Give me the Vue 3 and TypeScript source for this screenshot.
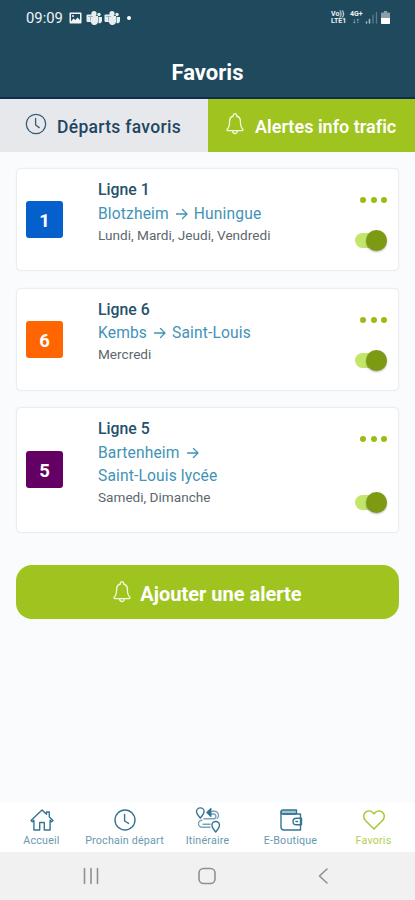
<script setup lang="ts">
import { ref } from 'vue'

interface Alert {
  line: number
  tone: string
  from: string
  to: string
  days: string
  wrap: boolean
  on: boolean
}

const alerts = ref<Alert[]>([
  { line: 1, tone: 'blue', from: 'Blotzheim', to: 'Huningue', days: 'Lundi, Mardi, Jeudi, Vendredi', wrap: false, on: true },
  { line: 6, tone: 'orange', from: 'Kembs', to: 'Saint-Louis', days: 'Mercredi', wrap: false, on: true },
  { line: 5, tone: 'purple', from: 'Bartenheim', to: 'Saint-Louis lycée', days: 'Samedi, Dimanche', wrap: true, on: true },
])
</script>

<template>
  <div class="screen">
    <header class="top">
      <div class="status">
        <span class="time">09:09</span>
        <svg class="s-img" viewBox="0 0 13 12"><rect x="0.5" y="0.5" width="12" height="11" rx="1" fill="#f2f6f8" /><path d="M2 9.500V2h9v6L8.500 5.500 6.500 8 4.500 6.500z" fill="#1f4a5e" /><circle cx="4" cy="4" r="1" fill="#f2f6f8" /></svg>
        <svg v-for="n in 2" :key="n" class="s-teams" viewBox="0 0 16 14"><g fill="#e6edf0"><circle cx="8" cy="2.700" r="2.600" /><circle cx="13" cy="3.500" r="1.700" /><path d="M5 5h7v6a3.600 3.600 0 0 1-7 .5z" /><path d="M12.500 6H16v4a2.500 2.500 0 0 1-3.500 2z" /><rect x="0.500" y="3.500" width="8" height="7.500" rx="1" /></g><path d="M2.500 5.500h4M4.500 5.500v4" stroke="#9fb1ba" stroke-width="1" /></svg>
        <i class="dot"></i>
        <span class="net"><b>Vo))</b><b>LTE1</b></span>
        <span class="net data"><b>4G+</b><b>↓↑</b></span>
        <svg class="signal" viewBox="0 0 13 13"><path d="M1.500 11v1M4.500 8.500v3.500" stroke="#a7bac3" stroke-width="1.600" /><path d="M8 4.500V12M11.500 1.500V12" stroke="#5d7b89" stroke-width="1.300" /></svg>
        <svg class="battery" viewBox="0 0 9 13"><path d="M3 0h3v1.500h2a1 1 0 0 1 1 1V12a1 1 0 0 1-1 1H1a1 1 0 0 1-1-1V2.500a1 1 0 0 1 1-1h2z" fill="#8a9fa9" /><path d="M0 7h9v5a1 1 0 0 1-1 1H1a1 1 0 0 1-1-1z" fill="#fff" /></svg>
      </div>
      <h1>Favoris</h1>
    </header>

    <nav class="tabs">
      <div class="tab">
        <svg class="clock" viewBox="0 0 22 22"><circle cx="11" cy="11" r="9.700" /><path d="M10.600 5.500V12l3.600 2.600" /></svg>
        <span>Départs favoris</span>
      </div>
      <div class="tab active">
        <svg class="bell" viewBox="0 0 18 22"><path d="M7.400 3V2.300a1.600 1.600 0 0 1 3.200 0V3c2.500.7 3.800 2.600 3.800 5.200 0 4.600.5 6.300 2.300 7.700.6.600.3 1.700-.6 1.700H1.900c-.9 0-1.200-1.100-.6-1.700 1.800-1.400 2.300-3.100 2.300-7.700C3.600 5.600 4.900 3.700 7.400 3zM6.700 18a2.300 2.500 0 0 0 4.600 0" /></svg>
        <span>Alertes info trafic</span>
      </div>
    </nav>

    <main class="content">
      <article v-for="a in alerts" :key="a.line" class="card">
        <div class="badge" :class="a.tone">{{ a.line }}</div>
        <div class="info">
          <h2>Ligne {{ a.line }}</h2>
          <p class="route">
            <span>{{ a.from }}</span>
            <svg class="arrow" viewBox="0 0 12 12"><path d="M0.500 6h10.500M6.500 1.500 11 6l-4.500 4.500" /></svg>
            <br v-if="a.wrap" />
            <span>{{ a.to }}</span>
          </p>
          <p class="days">{{ a.days }}</p>
        </div>
        <div class="actions">
          <div class="more"><i></i><i></i><i></i></div>
          <button class="toggle" :class="{ on: a.on }" @click="a.on = !a.on"><i></i></button>
        </div>
      </article>

      <button class="add">
        <svg class="bell" viewBox="0 0 18 22"><path d="M7.400 3V2.300a1.600 1.600 0 0 1 3.200 0V3c2.500.7 3.800 2.600 3.800 5.200 0 4.600.5 6.300 2.300 7.700.6.600.3 1.700-.6 1.700H1.900c-.9 0-1.200-1.100-.6-1.700 1.800-1.400 2.300-3.100 2.300-7.700C3.600 5.600 4.900 3.700 7.400 3zM6.700 18a2.300 2.500 0 0 0 4.600 0" /></svg>
        <span>Ajouter une alerte</span>
      </button>
    </main>

    <nav class="bottom">
      <div class="item">
        <svg viewBox="0 0 24 24"><path d="M1 12.500 12 2l4.500 4.300V4h2.800v5L23 12.500l-1.300 1.300-1.600-1.500V22h-5.800v-7.500H9.700V22H3.900v-9.700l-1.600 1.500z" /></svg>
        <span>Accueil</span>
      </div>
      <div class="item">
        <svg viewBox="0 0 24 24"><circle cx="12" cy="12" r="10" /><path d="M11.600 6.500V13l4 2.400" /></svg>
        <span>Prochain départ</span>
      </div>
      <div class="item">
        <svg class="trip" viewBox="0 0 26 26"><path class="road" d="M17 4.200h2.500a4.200 4.200 0 0 1 3 7M9 11.800h8.500M7 13.200a3.400 3.400 0 0 0 0 7h8M15 7h3.500a2.400 2.400 0 0 1 0 4.800M8 17.200h7" /><path d="M5.300 11C3 8.200 1.500 6.500 1.500 4.700a3.800 3.800 0 0 1 7.600 0c0 1.800-1.500 3.500-3.800 6.300zM20.700 25c-2.300-2.800-3.800-4.700-3.800-6.700a3.800 3.800 0 0 1 7.600 0c0 2-1.500 3.900-3.800 6.700z" /><path d="M15.800 1.800 12 5.600l3.800 3.600z" fill="#347594" /></svg>
        <span>Itinéraire</span>
      </div>
      <div class="item">
        <svg viewBox="0 0 24 24"><path d="M2 4a2 2 0 0 1 2-2h13.500v4H4a2 2 0 0 1-2-2z" fill="#a8c3d1" /><path d="M2 4v15a3 3 0 0 0 3 3h16.500V6H4M22.500 10.200h-5.200a3.300 3.300 0 0 0 0 6.600h5.200zM17 13.500h1.500" /></svg>
        <span>E-Boutique</span>
      </div>
      <div class="item active">
        <svg viewBox="0 0 24 24"><path d="M12 21 3.500 12.400C.8 9.600 1.300 5.600 4 3.900c2.700-1.700 6-.8 8 2 2-2.800 5.300-3.700 8-2 2.700 1.700 3.200 5.700.5 8.500z" /></svg>
        <span>Favoris</span>
      </div>
    </nav>

    <footer class="system">
      <svg viewBox="0 0 20 20"><path d="M3.500 2.500v15M10 2.500v15M16.500 2.500v15" /></svg>
      <svg viewBox="0 0 20 20"><rect x="2" y="2.500" width="16" height="15" rx="4.500" /></svg>
      <svg viewBox="0 0 20 20"><path d="M14 3 6.500 10l7.500 7" /></svg>
    </footer>
  </div>
</template>

<style>
body {
  margin: 0;
}
</style>

<style scoped>
.screen {
  width: 415px;
  height: 900px;
  display: flex;
  flex-direction: column;
  background: #f9fbfd;
  font-family: Roboto, "Liberation Sans", sans-serif;
  overflow: hidden;
}
h1, h2, p {
  margin: 0;
}
svg {
  fill: none;
  stroke-linecap: round;
  stroke-linejoin: round;
  flex: none;
}
.top {
  height: 99px;
  box-sizing: border-box;
  background: #1f4a5e;
  border-bottom: 2px solid #122c50;
  color: #fff;
}
.status {
  height: 34px;
  box-sizing: border-box;
  padding: 1px 25px 0 26px;
  display: flex;
  align-items: center;
}
.time {
  width: 43px;
  font-size: 14.8px;
  color: #eef3f5;
}
.s-img {
  width: 13px;
  height: 12px;
  margin-right: 4px;
}
.s-teams {
  width: 16px;
  height: 14px;
  margin-right: 2px;
}
.dot {
  width: 4px;
  height: 4px;
  margin-left: 5px;
  border-radius: 50%;
  background: #fff;
}
.net {
  width: 17px;
  margin-left: auto;
  display: flex;
  flex-direction: column;
  font-size: 7px;
  line-height: 6.5px;
  color: #eef3f5;
  white-space: nowrap;
}
.net b {
  font-weight: 700;
}
.net.data {
  width: 12px;
  margin: 0 3px 0 2px;
  text-align: center;
}
.signal {
  width: 13px;
  height: 13px;
  margin-right: 3px;
}
.battery {
  width: 9px;
  height: 13px;
}
h1 {
  padding-top: 26px;
  text-align: center;
  font-size: 22px;
  line-height: 26px;
  font-weight: 700;
}
.tabs {
  height: 53px;
  display: flex;
}
.tab {
  width: 208px;
  box-sizing: border-box;
  padding-left: 25px;
  display: flex;
  align-items: center;
  background: #e7e8ec;
  color: #1e4663;
  font-size: 17.5px;
  letter-spacing: 0.3px;
  font-weight: 500;
  white-space: nowrap;
}
.tab.active {
  width: 207px;
  padding-left: 18px;
  background: #9fc41f;
  color: #fff;
  font-size: 18px;
  letter-spacing: 0.02px;
  font-weight: 600;
}
.tab span {
  padding-top: 2px;
}
.tab.active span {
  padding-top: 1px;
}
.clock {
  width: 22px;
  height: 22px;
  margin: 0 10px 3px 0;
  stroke: #356079;
  stroke-width: 1.3;
}
.bell {
  width: 18px;
  height: 22px;
  stroke: #f3f9dc;
  stroke-width: 1.3;
}
.tab .bell {
  margin: 0 11px 3px 0;
}
.content {
  flex: 1;
  padding: 16px 16px 0;
  display: flex;
  flex-direction: column;
}
.card {
  min-height: 103px;
  box-sizing: border-box;
  margin-bottom: 16.5px;
  padding: 0 11px 0 9px;
  display: flex;
  align-items: center;
  background: #fff;
  border: 1px solid #ecedf0;
  border-radius: 5px;
  box-shadow: 0 0 2px rgba(40, 60, 80, 0.06);
}
.badge {
  width: 37px;
  height: 37px;
  box-sizing: border-box;
  padding-top: 2px;
  border-radius: 3px;
  color: #fff;
  font-size: 18.5px;
  line-height: 36px;
  font-weight: 700;
  text-align: center;
}
.blue {
  background: #0560cc;
}
.orange {
  background: #ff6500;
}
.purple {
  background: #640064;
}
.info {
  align-self: stretch;
  flex: 1;
  padding: 9px 0 25px 35px;
}
h2 {
  font-size: 15.8px;
  line-height: 24px;
  font-weight: 500;
  color: #24516c;
}
.route {
  padding-top: 0.5px;
  font-size: 15.6px;
  line-height: 23px;
  letter-spacing: 0.14px;
  color: #4293b5;
}
.arrow {
  width: 12px;
  height: 12px;
  margin: 0 6px 0 7px;
  vertical-align: -1px;
  stroke: #4293b5;
  stroke-width: 1.3;
}
.days {
  font-size: 13.6px;
  line-height: 19px;
  color: #5d676d;
}
.actions {
  align-self: stretch;
  width: 33px;
  padding: 28px 0 18px;
  display: flex;
  flex-direction: column;
  justify-content: space-between;
  align-items: flex-end;
}
.more {
  width: 27px;
  display: flex;
  justify-content: space-between;
}
.more i {
  width: 6px;
  height: 6px;
  border-radius: 50%;
  background: #9abd16;
}
.toggle {
  width: 32px;
  height: 15px;
  margin: 4px 0;
  padding: 0;
  border: 0;
  background: #dcdfe0;
  border-radius: 8px;
  display: flex;
  align-items: center;
}
.toggle i {
  width: 21px;
  height: 21px;
  flex: none;
  border-radius: 50%;
  background: #aaa;
  box-shadow: 0 1px 2px rgba(0, 0, 0, 0.3);
}
.toggle.on {
  background: #c4e56b;
  justify-content: flex-end;
}
.toggle.on i {
  background: #7c9b12;
}
.add {
  height: 54px;
  margin-top: 16px;
  padding: 0;
  border: 0;
  border-radius: 16px;
  background: #9fc41f;
  color: #fff;
  display: flex;
  align-items: center;
  justify-content: center;
  gap: 9px;
  font-family: inherit;
  font-size: 20px;
  font-weight: 700;
}
.add span {
  padding-top: 3px;
}
.bottom {
  height: 49px;
  display: flex;
  background: #fff;
}
.item {
  width: 83px;
  padding-top: 5px;
  display: flex;
  flex-direction: column;
  align-items: center;
  font-size: 10.7px;
  line-height: 14px;
  letter-spacing: 0.2px;
  color: #6998af;
  white-space: nowrap;
}
.item svg {
  width: 24px;
  height: 24px;
  margin-bottom: 2px;
  stroke: #347594;
  stroke-width: 1.4;
}
.item .trip {
  width: 26px;
  height: 26px;
  margin: -1px 0 1px;
}
.item .road {
  stroke: #7ba3b8;
}
.item.active {
  color: #b2cf51;
}
.item.active svg {
  stroke: #a3c52f;
}
.system {
  height: 48px;
  box-sizing: border-box;
  padding: 0 82px 0 81px;
  display: flex;
  align-items: center;
  justify-content: space-between;
  background: #f1f1f1;
}
.system svg {
  width: 20px;
  height: 20px;
  stroke: #909090;
  stroke-width: 1.6;
}
</style>
